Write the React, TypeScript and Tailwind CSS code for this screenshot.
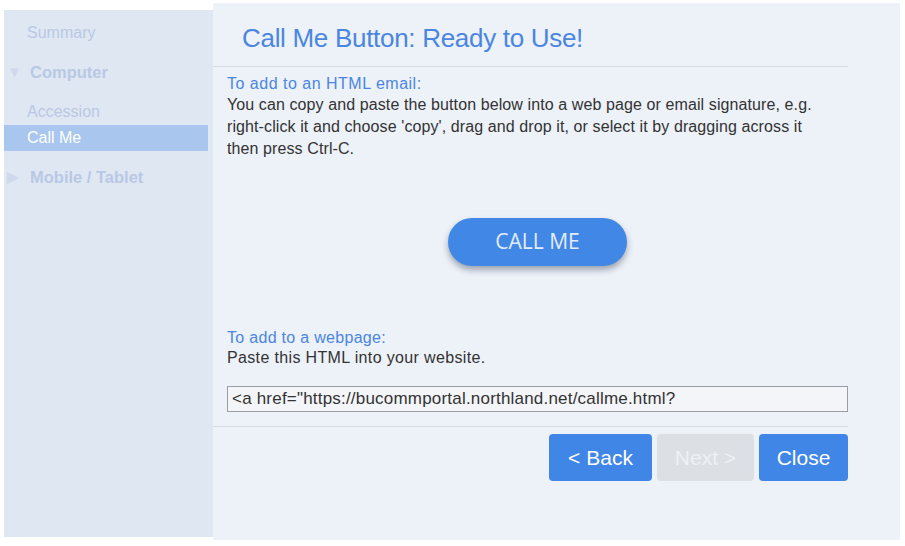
import { useState } from "react";

const sideItems = [
  { label: "Summary", kind: "item" },
  { label: "Computer", kind: "group", open: true },
  { label: "Accession", kind: "item" },
  { label: "Call Me", kind: "item", active: true },
  { label: "Mobile / Tablet", kind: "group", open: false },
];

export default function App() {
  const [snippet] = useState('<a href="https://bucommportal.northland.net/callme.html?');

  return (
    <div className="w-[905px] h-[546px] bg-white pl-1 pt-[3px] font-['Liberation_Sans',Arial,sans-serif]">
      <div className="flex w-[896px] h-[537px]">
        {/* sidebar */}
        <div className="mt-[7px] mb-[3px] w-[209px] bg-[#dfe7f3] flex flex-col pt-[10px]">
          {sideItems.map((it) =>
            it.kind === "group" ? (
              <div key={it.label} className="flex items-center h-[26px] mt-[13px] mb-[14px] text-[16.5px] font-bold text-[#b9c8e4]">
                <span className="w-[26px] pl-[3px] text-[15px] text-[#cfd9eb]">{it.open ? "▼" : "▶"}</span>
                {it.label}
              </div>
            ) : (
              <div
                key={it.label}
                className={
                  "flex items-center h-[26px] pl-[23px] mr-[5px] text-[16px] " +
                  (it.active ? "bg-[#a9c6ee] text-white" : "text-[#b9c8e4]")
                }
              >
                {it.label}
              </div>
            )
          )}
        </div>

        {/* main */}
        <div className="flex-1 bg-[#edf1f8] flex flex-col">
          <div className="mr-[52px] border-b border-[#d5dbe4] pl-[29px] pt-[20px] pb-[13px]">
            <h1 className="text-[26px] leading-[30px] font-light text-[#4a86e0] tracking-[-0.3px]">
              Call Me Button: Ready to Use!
            </h1>
          </div>

          <div className="pl-[14px] pr-[52px] pt-[6px]">
            <div className="text-[16px] leading-[21px] tracking-[0.5px] text-[#4a86e0]">To add to an HTML email:</div>
            <p className="text-[16px] leading-[22px] tracking-[0.1px] text-[#333]">
              You can copy and paste the button below into a web page or email signature, e.g.
              <br />
              right-click it and choose 'copy', drag and drop it, or select it by dragging across it
              <br />
              then press Ctrl-C.
            </p>

            <div className="flex justify-center pt-[58px] pb-[62px]">
              <button className="w-[179px] h-[48px] rounded-full bg-[#4187e6] text-[#e4ecfa] text-[21px] font-['Open_Sans',sans-serif] shadow-[0_4px_6px_rgba(60,70,90,0.45)]">
                CALL ME
              </button>
            </div>

            <div className="text-[16px] leading-[20px] tracking-[0.3px] text-[#4a86e0]">To add to a webpage:</div>
            <div className="text-[16px] leading-[20px] tracking-[0.35px] text-[#333]">Paste this HTML into your website.</div>

            <div className="mt-[18px] mb-[14px] h-[26px] border border-[#9a9ea4] bg-[#f3f5f8] flex items-center px-[4px] text-[17px] tracking-[0.2px] text-[#333] overflow-hidden whitespace-nowrap">
              {snippet}
            </div>
          </div>

          <div className="mr-[52px] border-t border-[#d5dbe4] pt-[7px] flex justify-end gap-[5px]">
            <button className="w-[103px] h-[47px] rounded-[4px] bg-[#3f86e6] text-white text-[21px]">&lt; Back</button>
            <button className="w-[97px] h-[47px] rounded-[4px] bg-[#dce0e5] text-[#eef1f5] text-[21px]">Next &gt;</button>
            <button className="w-[89px] h-[47px] rounded-[4px] bg-[#3f86e6] text-white text-[21px]">Close</button>
          </div>
        </div>
      </div>
    </div>
  );
}
